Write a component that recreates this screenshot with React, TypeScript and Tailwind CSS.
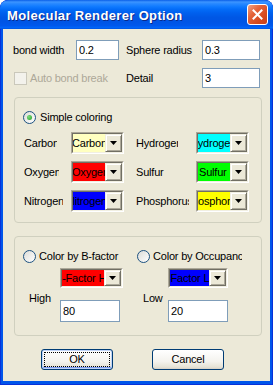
import React from "react";

const Arrow = () => (
  <svg width="7" height="4" viewBox="0 0 7 4">
    <polygon points="0,0 7,0 3.5,4" fill="#000" />
  </svg>
);

function Combo({ w, h, field, text, shift }: { w: string; h: string; field: string; text: string; shift: string }) {
  return (
    <div className={`${w} ${h} shrink-0 flex border border-t-[#ACA899] border-l-[#ACA899] border-b-white border-r-white`}>
      <div className="flex-1 min-w-0 flex border border-t-[#716F64] border-l-[#716F64] border-b-[#F1EFE2] border-r-[#F1EFE2]">
        <div className={`flex-1 min-w-0 overflow-hidden flex items-center ${field}`}>
          <span className={`whitespace-nowrap ${shift}`}>{text}</span>
        </div>
        <div className="w-[17px] shrink-0 bg-[#ECE9D8] flex items-center justify-center border border-t-[#F1EFE2] border-l-[#F1EFE2] border-b-[#716F64] border-r-[#716F64] shadow-[inset_1px_1px_0_#FFFFFF,inset_-1px_-1px_0_#ACA899]">
          <Arrow />
        </div>
      </div>
    </div>
  );
}

function Radio({ checked }: { checked?: boolean }) {
  return (
    <div className="w-[13px] h-[13px] shrink-0 rounded-full border border-[#1C5180] bg-[linear-gradient(135deg,#DCDCD7,#FFFFFF)] flex items-center justify-center">
      {checked && <div className="w-[5px] h-[5px] rounded-full bg-[radial-gradient(circle_at_35%_35%,#7EDB7E,#21A121)]" />}
    </div>
  );
}

function Input({ w, h, value }: { w: string; h: string; value: string }) {
  return (
    <div className={`${w} ${h} shrink-0 border border-[#7F9DB9] bg-white flex items-center pl-[2px]`}>{value}</div>
  );
}

export default function App() {
  return (
    <div className="w-[273px] h-[385px] flex flex-col bg-[#0055EA] rounded-t-[8px] overflow-hidden font-['Liberation_Sans',Arial,sans-serif] text-[11px] text-black shadow-[inset_0_0_0_1px_#0831D9]">
      {/* Title bar */}
      <div className="h-[29px] shrink-0 flex items-center justify-between pl-[7px] pr-[5px] rounded-t-[8px] bg-[linear-gradient(to_bottom,#0A5FE8_0%,#3D95FF_7%,#2A8AFF_12%,#117BFF_22%,#036CF8_32%,#0060EE_45%,#0057E5_60%,#0055E5_75%,#0058EC_88%,#0064F8_95%,#0054E0_100%)]">
        <span className="text-white font-bold text-[13px] tracking-[0.35px] pt-[2px] [text-shadow:1px_1px_0_#0A2A8A]">Molecular Renderer Option</span>
        <div className="w-[21px] h-[21px] rounded-[3px] border border-white bg-[linear-gradient(135deg,#F0A285_0%,#E4643A_35%,#D64A1E_70%,#C7401A_100%)] flex items-center justify-center">
          <svg width="11" height="11" viewBox="0 0 11 11">
            <path d="M1.5 1.5 L9.5 9.5 M9.5 1.5 L1.5 9.5" stroke="#fff" strokeWidth="2" strokeLinecap="square" />
          </svg>
        </div>
      </div>

      {/* Body */}
      <div className="flex-1 ml-[3px] mr-[3px] mb-[4px] bg-[#ECE9D8] flex flex-col pl-[10px] pt-[11px] tracking-[-0.2px]">
        {/* Row 1 */}
        <div className="flex items-center h-[20px]">
          <span className="w-[63px] shrink-0">bond width</span>
          <Input w="w-[43px]" h="h-[20px]" value="0.2" />
          <span className="ml-[7px] w-[76px] shrink-0">Sphere radius</span>
          <Input w="w-[58px]" h="h-[20px]" value="0.3" />
        </div>
        {/* Row 2 */}
        <div className="flex items-center h-[20px] mt-[8px]">
          <div className="w-[113px] shrink-0 flex items-center pl-[1px]">
            <div className="w-[13px] h-[13px] border border-[#CAC8BB] bg-[#F3F2EC]" />
            <span className="ml-[3px] text-[#ACA899]">Auto bond break</span>
          </div>
          <span className="w-[76px] shrink-0">Detail</span>
          <Input w="w-[58px]" h="h-[20px]" value="3" />
        </div>

        {/* Group 1 */}
        <div className="mt-[9px] ml-[1px] w-[248px] border border-[#D0D0BF] rounded-[4px] pl-[8px] pt-[13px] pb-[10px] flex flex-col">
          <div className="flex items-center h-[13px]">
            <Radio checked />
            <span className="ml-[4px]">Simple coloring</span>
          </div>
          <div className="flex flex-col gap-[7px] mt-[8px]">
            <div className="flex items-center h-[22px]">
              <div className="w-[48px] shrink-0 pl-[1px]"><div className="w-[33px] overflow-hidden whitespace-nowrap">Carbon</div></div>
              <Combo w="w-[53px]" h="h-[22px]" field="bg-[#FFFFC0]" text="Carbon" shift="ml-[-1px]" />
              <div className="ml-[12px] w-[60px] shrink-0"><div className="w-[42px] overflow-hidden whitespace-nowrap">Hydrogen</div></div>
              <Combo w="w-[53px]" h="h-[22px]" field="bg-[#00FFFF]" text="Hydrogen" shift="ml-[-8px]" />
            </div>
            <div className="flex items-center h-[22px]">
              <div className="w-[48px] shrink-0 pl-[1px]"><div className="w-[35px] overflow-hidden whitespace-nowrap">Oxygen</div></div>
              <Combo w="w-[53px]" h="h-[22px]" field="bg-[#FF0000]" text="Oxygen" shift="ml-[-1px]" />
              <div className="ml-[12px] w-[60px] shrink-0"><div className="w-[45px] overflow-hidden whitespace-nowrap">Sulfur</div></div>
              <Combo w="w-[53px]" h="h-[22px]" field="bg-[#00FF00]" text="Sulfur" shift="ml-[1px]" />
            </div>
            <div className="flex items-center h-[22px]">
              <div className="w-[48px] shrink-0 pl-[1px]"><div className="w-[39px] overflow-hidden whitespace-nowrap">Nitrogen</div></div>
              <Combo w="w-[53px]" h="h-[22px]" field="bg-[#0000FF]" text="Nitrogen" shift="ml-[-6px]" />
              <div className="ml-[12px] w-[60px] shrink-0"><div className="w-[53px] overflow-hidden whitespace-nowrap">Phosphorus</div></div>
              <Combo w="w-[53px]" h="h-[22px]" field="bg-[#FFFF00]" text="Phosphorus" shift="ml-[-13px]" />
            </div>
          </div>
        </div>

        {/* Group 2 */}
        <div className="mt-[13px] ml-[1px] w-[248px] border border-[#D0D0BF] rounded-[4px] pl-[8px] pt-[13px] pb-[13px] flex flex-col">
          <div className="flex items-center h-[13px]">
            <div className="w-[114px] shrink-0 flex items-center">
              <Radio />
              <span className="ml-[3px] whitespace-nowrap">Color by B-factor</span>
            </div>
            <div className="flex items-center">
              <Radio />
              <div className="ml-[3px] w-[89px] overflow-hidden whitespace-nowrap">Color by Occupancy</div>
            </div>
          </div>
          <div className="flex items-center h-[20px] mt-[5px]">
            <div className="w-[114px] shrink-0 pl-[37px]">
              <Combo w="w-[63px]" h="h-[20px]" field="bg-[#FF0000]" text="B-Factor High" shift="ml-[-7px]" />
            </div>
            <div className="pl-[31px]">
              <Combo w="w-[60px]" h="h-[20px]" field="bg-[#0000FF]" text="B-Factor Low" shift="ml-[-10px]" />
            </div>
          </div>
          <div className="flex items-start mt-[4px]">
            <div className="w-[114px] shrink-0 flex items-start pl-[6px]">
              <span className="w-[31px] shrink-0 leading-[13px]">High</span>
              <div className="mt-[8px]"><Input w="w-[60px]" h="h-[22px]" value="80" /></div>
            </div>
            <div className="flex items-start pl-[6px]">
              <span className="w-[25px] shrink-0 leading-[13px]">Low</span>
              <div className="mt-[8px]"><Input w="w-[60px]" h="h-[22px]" value="20" /></div>
            </div>
          </div>
        </div>

        {/* Buttons */}
        <div className="flex mt-[13px] pl-[28px] gap-[39px]">
          <div className="w-[72px] h-[21px] rounded-[3px] border border-[#003C74] bg-[linear-gradient(to_bottom,#FFFFFF_0%,#F4F3EE_60%,#E6E3D6_90%,#D6D0C5_100%)] shadow-[inset_0_0_0_1px_#C0D4F8,inset_0_-1px_0_1px_#7C9AEF] p-[2px]">
            <div className="w-full h-full border border-dotted border-black flex items-center justify-center">OK</div>
          </div>
          <div className="w-[72px] h-[21px] rounded-[3px] border border-[#003C74] bg-[linear-gradient(to_bottom,#FFFFFF_0%,#F4F3EE_60%,#E6E3D6_90%,#D6D0C5_100%)] flex items-center justify-center">
            Cancel
          </div>
        </div>
      </div>
    </div>
  );
}
